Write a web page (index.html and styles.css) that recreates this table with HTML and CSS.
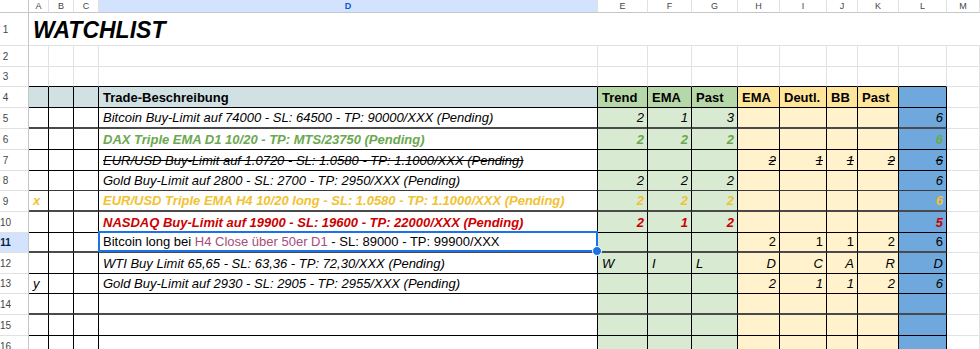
FILE: index.html
```html
<!DOCTYPE html>
<html>
<head>
<meta charset="utf-8">
<link rel="stylesheet" href="styles.css">
</head>
<body>
<div class="sheet">
  <div class="row">
    <div class="ch corner"></div><div class="ch">A</div><div class="ch">B</div><div class="ch">C</div><div class="ch active">D</div><div class="ch">E</div><div class="ch">F</div><div class="ch">G</div><div class="ch">H</div><div class="ch">I</div><div class="ch">J</div><div class="ch">K</div><div class="ch">L</div><div class="ch">M</div>
  </div>
  <div class="row">
    <div class="h">1</div><div class="c title">WATCHLIST</div>
  </div>
  <div class="row">
    <div class="h">2</div><div class="c"></div><div class="c"></div><div class="c"></div><div class="c"></div><div class="c"></div><div class="c"></div><div class="c"></div><div class="c"></div><div class="c"></div><div class="c"></div><div class="c"></div><div class="c"></div><div class="c"></div>
  </div>
  <div class="row">
    <div class="h">3</div><div class="c top"></div><div class="c top"></div><div class="c top"></div><div class="c top"></div><div class="c top"></div><div class="c top"></div><div class="c top"></div><div class="c top"></div><div class="c top"></div><div class="c top"></div><div class="c top"></div><div class="c top"></div><div class="c"></div>
  </div>
  <div class="row b">
    <div class="h">4</div><div class="c t fd"></div><div class="c t fd"></div><div class="c t fd"></div><div class="c t fd">Trade-Beschreibung</div><div class="c t fgh">Trend</div><div class="c t fgh">EMA</div><div class="c t fgh">Past</div><div class="c t fyh">EMA</div><div class="c t fyh">Deutl.</div><div class="c t fyh">BB</div><div class="c t fyh">Past</div><div class="c t fb"></div><div class="c"></div>
  </div>
  <div class="row i thick">
    <div class="h">5</div><div class="c t"></div><div class="c t"></div><div class="c t"></div><div class="c t">Bitcoin Buy-Limit auf 74000 - SL: 64500 - TP: 90000/XXX (Pending)</div><div class="c t fg n">2</div><div class="c t fg n">1</div><div class="c t fg n">3</div><div class="c t fy"></div><div class="c t fy"></div><div class="c t fy"></div><div class="c t fy"></div><div class="c t fb n">6</div><div class="c"></div>
  </div>
  <div class="row i b green">
    <div class="h">6</div><div class="c t"></div><div class="c t"></div><div class="c t"></div><div class="c t">DAX Triple EMA D1 10/20 - TP: MTS/23750 (Pending)</div><div class="c t fg n">2</div><div class="c t fg n">2</div><div class="c t fg n">2</div><div class="c t fy"></div><div class="c t fy"></div><div class="c t fy"></div><div class="c t fy"></div><div class="c t fb n">6</div><div class="c"></div>
  </div>
  <div class="row i">
    <div class="h">7</div><div class="c t"></div><div class="c t"></div><div class="c t"></div><div class="c t s">EUR/USD Buy-Limit auf 1.0720 - SL: 1.0580 - TP: 1.1000/XXX (Pending)</div><div class="c t fg"></div><div class="c t fg"></div><div class="c t fg"></div><div class="c t fy n s">2</div><div class="c t fy n s">1</div><div class="c t fy n s">1</div><div class="c t fy n s">2</div><div class="c t fb n s">6</div><div class="c"></div>
  </div>
  <div class="row i mid">
    <div class="h">8</div><div class="c t"></div><div class="c t"></div><div class="c t"></div><div class="c t">Gold Buy-Limit auf 2800 - SL: 2700 - TP: 2950/XXX (Pending)</div><div class="c t fg n">2</div><div class="c t fg n">2</div><div class="c t fg n">2</div><div class="c t fy"></div><div class="c t fy"></div><div class="c t fy"></div><div class="c t fy"></div><div class="c t fb n">6</div><div class="c"></div>
  </div>
  <div class="row i b orange thick">
    <div class="h">9</div><div class="c t">x</div><div class="c t"></div><div class="c t"></div><div class="c t">EUR/USD Triple EMA H4 10/20 long - SL: 1.0580 - TP: 1.1000/XXX (Pending)</div><div class="c t fg n">2</div><div class="c t fg n">2</div><div class="c t fg n">2</div><div class="c t fy"></div><div class="c t fy"></div><div class="c t fy"></div><div class="c t fy"></div><div class="c t fb n">6</div><div class="c"></div>
  </div>
  <div class="row i b red">
    <div class="h">10</div><div class="c t"></div><div class="c t"></div><div class="c t"></div><div class="c t">NASDAQ Buy-Limit auf 19900 - SL: 19600 - TP: 22000/XXX (Pending)</div><div class="c t fg n">2</div><div class="c t fg n">1</div><div class="c t fg n">2</div><div class="c t fy"></div><div class="c t fy"></div><div class="c t fy"></div><div class="c t fy"></div><div class="c t fb n">5</div><div class="c"></div>
  </div>
  <div class="row thick">
    <div class="h current">11</div><div class="c t"></div><div class="c t"></div><div class="c t"></div><div class="c t sel"><span>Bitcoin long bei <span class="pink">H4 Close über 50er D1</span> - SL: 89000 - TP: 99900/XXX</span></div><div class="c t fg"></div><div class="c t fg"></div><div class="c t fg"></div><div class="c t fy n">2</div><div class="c t fy n">1</div><div class="c t fy n">1</div><div class="c t fy n">2</div><div class="c t fb n">6</div><div class="c"></div>
  </div>
  <div class="row i">
    <div class="h">12</div><div class="c t"></div><div class="c t"></div><div class="c t"></div><div class="c t">WTI Buy Limit 65,65 - SL: 63,36 - TP: 72,30/XXX (Pending)</div><div class="c t fg">W</div><div class="c t fg">I</div><div class="c t fg">L</div><div class="c t fy n">D</div><div class="c t fy n">C</div><div class="c t fy n">A</div><div class="c t fy n">R</div><div class="c t fb n">D</div><div class="c"></div>
  </div>
  <div class="row i">
    <div class="h">13</div><div class="c t">y</div><div class="c t"></div><div class="c t"></div><div class="c t">Gold Buy-Limit auf 2930 - SL: 2905 - TP: 2955/XXX (Pending)</div><div class="c t fg"></div><div class="c t fg"></div><div class="c t fg"></div><div class="c t fy n">2</div><div class="c t fy n">1</div><div class="c t fy n">1</div><div class="c t fy n">2</div><div class="c t fb n">6</div><div class="c"></div>
  </div>
  <div class="row thick">
    <div class="h">14</div><div class="c t"></div><div class="c t"></div><div class="c t"></div><div class="c t"></div><div class="c t fg"></div><div class="c t fg"></div><div class="c t fg"></div><div class="c t fy"></div><div class="c t fy"></div><div class="c t fy"></div><div class="c t fy"></div><div class="c t fb"></div><div class="c"></div>
  </div>
  <div class="row">
    <div class="h">15</div><div class="c t"></div><div class="c t"></div><div class="c t"></div><div class="c t"></div><div class="c t fg"></div><div class="c t fg"></div><div class="c t fg"></div><div class="c t fy"></div><div class="c t fy"></div><div class="c t fy"></div><div class="c t fy"></div><div class="c t fb"></div><div class="c"></div>
  </div>
  <div class="row">
    <div class="h">16</div><div class="c t"></div><div class="c t"></div><div class="c t"></div><div class="c t"></div><div class="c t fg"></div><div class="c t fg"></div><div class="c t fg"></div><div class="c t fy"></div><div class="c t fy"></div><div class="c t fy"></div><div class="c t fy"></div><div class="c t fb"></div><div class="c"></div>
  </div>
</div>
</body>
</html>
```

FILE: styles.css
```css
* { box-sizing: border-box; }

body {
  margin: 0;
  background: #fff;
  font-family: "Liberation Sans", Arial, sans-serif;
  overflow: hidden;
}

.sheet {
  display: grid;
  grid-template-rows: 13px 33px 21px 20px 21px 21px 21px 21px 20px 21px 21px 20px 21px 20px 21px 21px 21px;
  width: 997px;
  margin: 0 0 0 -17px;
}

.row {
  display: grid;
  grid-template-columns: 46px 20px 25px 25px 499px 50px 44px 46px 42px 47px 31px 41px 48px 1fr;
}

/* column headers */
.ch {
  display: flex;
  align-items: flex-start;
  justify-content: center;
  padding-top: 1px;
  font-size: 9px;
  line-height: 10px;
  color: #444746;
  border-right: 1px solid #e1e1e1;
  border-bottom: 1px solid #c4c7c5;
}
.ch.corner { border-right-color: #c4c7c5; }
.ch.active {
  background: #d3e3fd;
  color: #0b57d0;
  font-weight: 700;
}

/* row headers */
.h {
  display: flex;
  align-items: center;
  justify-content: center;
  font-size: 10px;
  font-weight: 400;
  font-style: normal;
  color: #444746;
  border-right: 1px solid #c4c7c5;
  border-bottom: 1px solid #e1e1e1;
}
.h.current {
  background: #d3e3fd;
  color: #041e49;
  font-weight: 700;
}

/* cells */
.c {
  display: flex;
  align-items: flex-end;
  padding: 0 3px 2px 4px;
  font-size: 13px;
  white-space: nowrap;
  overflow: hidden;
  border-right: 1px solid #e2e2e2;
  border-bottom: 1px solid #e2e2e2;
}
.c.n { justify-content: flex-end; }

.title {
  grid-column: 2 / -1;
  border-right: none;
  padding: 0 0 1px 4px;
  font-size: 23px;
  font-weight: 700;
  font-style: italic;
}

.c.top { border-bottom-color: #000; }
.c.t {
  border-right-color: #000;
  border-bottom-color: #000;
}
.thick .c.t { border-bottom: 2px solid #4a4a4a; }
.mid .c.t { border-bottom-color: #3a3a3a; }

/* fills */
.fd { background: #d0e0e3; }
.fgh { background: #b6d7a8; }
.fyh { background: #ffe599; }
.fb { background: #6fa8dc; }
.fg { background: #d9ead3; }
.fy { background: #fff2cc; }

/* text styles */
.i .c { font-style: italic; }
.b .c { font-weight: 700; }
.green .c { color: #6aa84f; }
.orange .c { color: #f1c232; }
.red .c { color: #cc0000; }
.s { text-decoration: line-through; }
.pink { color: #a64d79; }

/* selected cell */
.sel {
  position: relative;
  overflow: visible;
  z-index: 2;
}
.sel::before {
  content: "";
  position: absolute;
  left: -1px;
  top: -2px;
  right: -1px;
  bottom: -1px;
  border: 2px solid #1a73e8;
  pointer-events: none;
}
.sel::after {
  content: "";
  position: absolute;
  right: -5px;
  bottom: -5px;
  width: 8px;
  height: 8px;
  border-radius: 50%;
  background: #1a73e8;
  border: 1px solid #fff;
}
```
